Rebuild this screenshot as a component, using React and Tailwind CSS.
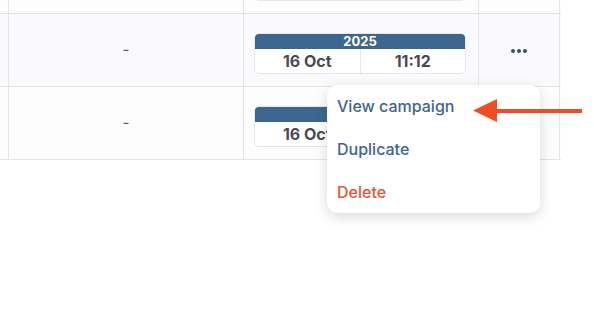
import React from 'react';

const DatePill = () => (
    <div className="mt-[6px] w-[212px] h-[41px] rounded-[5px] border border-[#e6e7ec] bg-white flex flex-col overflow-hidden">
        <div className="h-[15px] bg-[#3d6690] text-white text-[13px] font-bold leading-[15px] text-center">2025</div>
        <div className="flex flex-1 text-[16px] font-bold text-[#4a4a52]">
            <div className="flex-1 flex items-center justify-center border-r border-[#e6e7ec]">16 Oct</div>
            <div className="flex-1 flex items-center justify-center">11:12</div>
        </div>
    </div>
);

const Row = ({ bg, menu }) => (
    <div className={`flex h-[73px] border-b border-[#e4e5e8] ${bg}`}>
        <div className="w-[9px] border-r border-[#e4e5e8]" />
        <div className="w-[235px] border-r border-[#e4e5e8] flex items-center justify-center text-[#55565c] text-[15px]">-</div>
        <div className="w-[235px] border-r border-[#e4e5e8] flex items-center justify-center pr-[2px]">
            <DatePill />
        </div>
        <div className="w-[81px] border-r border-[#e4e5e8] flex items-center justify-center">
            {menu && (
                <div className="flex gap-[2px] mt-[1px]">
                    <span className="w-[4px] h-[4px] rounded-full bg-[#3b4d68]" />
                    <span className="w-[4px] h-[4px] rounded-full bg-[#3b4d68]" />
                    <span className="w-[4px] h-[4px] rounded-full bg-[#3b4d68]" />
                </div>
            )}
        </div>
    </div>
);

export default function App() {
    return (
        <div className="relative w-[594px] h-[330px] bg-white overflow-hidden" style={{ fontFamily: 'Inter, "Noto Sans", sans-serif' }}>
            <div className="-mt-[59px] w-[561px]">
                <Row bg="bg-[#fdfdfd]" />
                <Row bg="bg-[#fafafc]" menu />
                <Row bg="bg-[#fdfdfd]" />
            </div>

            {/* dropdown menu */}
            <div className="absolute left-[327px] top-[85px] w-[213px] h-[128px] bg-white rounded-[10px] shadow-[0_4px_14px_rgba(0,0,0,0.14)] flex flex-col justify-between py-[9px] text-[16px] font-medium">
                <div className="px-[10px] text-[#3d6690]">View campaign</div>
                <div className="px-[10px] text-[#3d6690]">Duplicate</div>
                <div className="px-[10px] text-[#e5553a]">Delete</div>
            </div>

            {/* annotation arrow */}
            <svg className="absolute left-[470px] top-[97px]" width="116" height="28" viewBox="0 0 116 28">
                <path d="M26 12 H112 V16 H26 Z" fill="#f04d24" />
                <path d="M3 13.5 L27 2 L27 25 Z" fill="#f04d24" />
            </svg>
        </div>
    );
}
